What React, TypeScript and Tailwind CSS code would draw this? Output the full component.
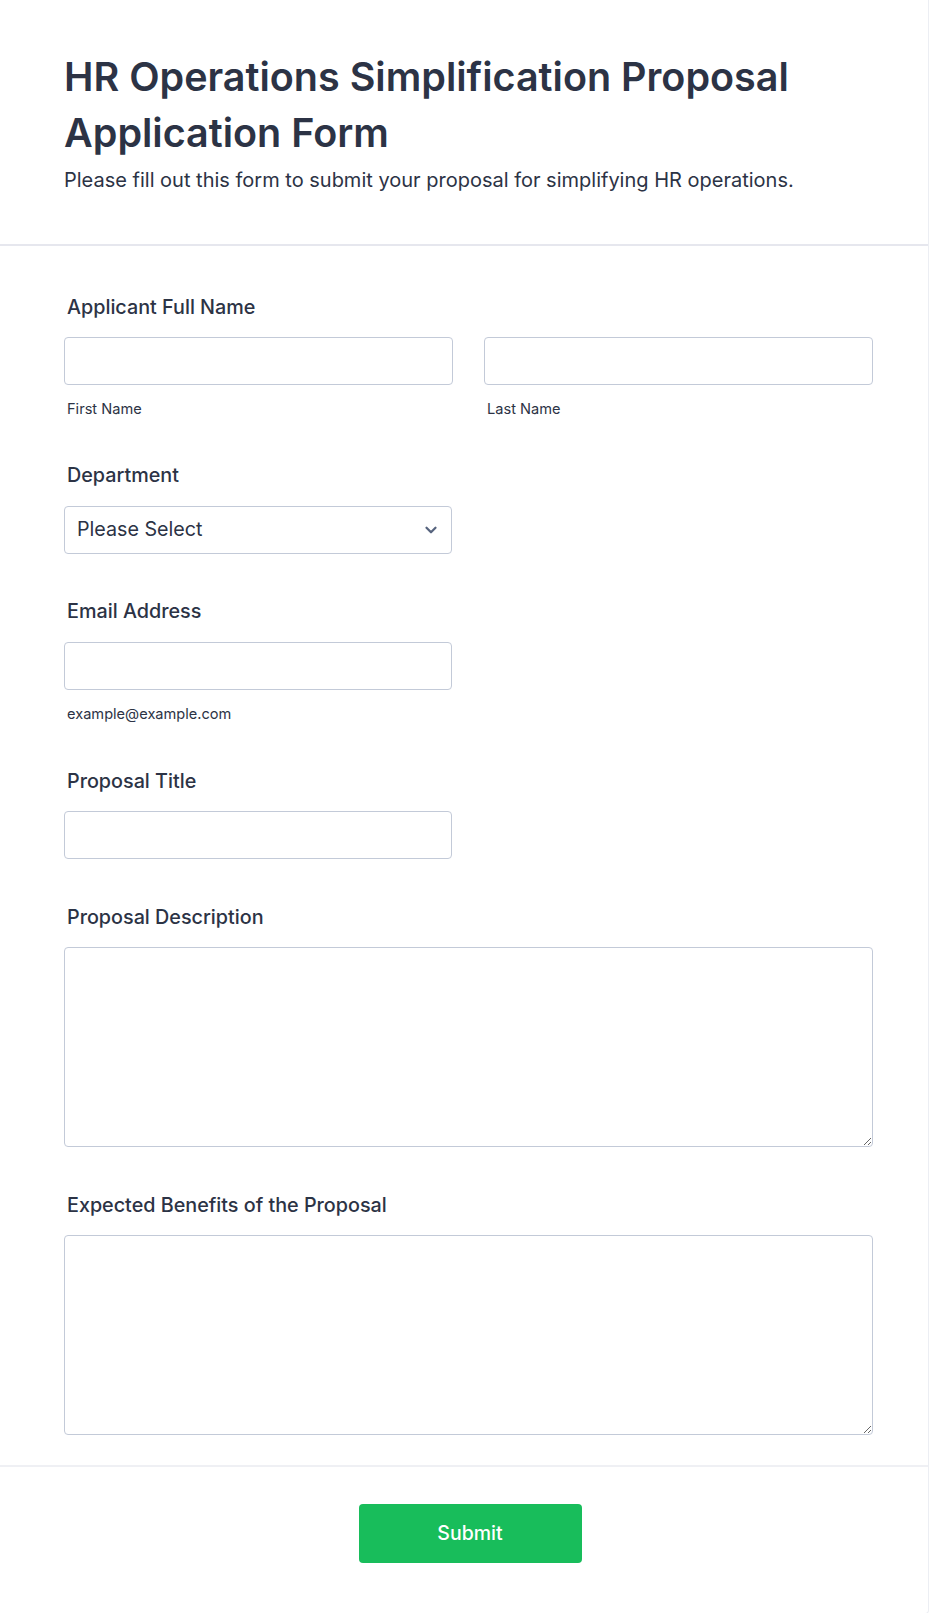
import React from 'react';
import { ChevronDown } from 'lucide-react';

const font = { fontFamily: 'Inter, "Noto Sans", sans-serif' };

function Label({ children }: { children: React.ReactNode }) {
  return <label className="block pl-[3px] text-[19.75px] font-medium leading-[24px] text-[#2c3345]">{children}</label>;
}

function Sublabel({ children }: { children: React.ReactNode }) {
  return <span className="block pl-[3px] pt-[15px] text-[14.6px] leading-[18px] text-[#2c3345]">{children}</span>;
}

const fieldCls =
  'block h-[48px] rounded-[4px] border border-[#c3cad8] bg-white px-3 text-[19.7px] text-[#2c3345] outline-none';

export default function App() {
  return (
    <div className="min-h-[1613px] bg-white" style={font}>
      <div className="w-[929px] rounded-br-[4px] border-r border-b border-[#eceef3] bg-white">
        {/* Header */}
        <div className="border-b-2 border-[#e6e7ee] pl-[64px] pr-[55px] pt-[49px] pb-[50px]">
          <h1 className="text-[39.5px] font-semibold leading-[56px] text-[#2c3345]">
            HR Operations Simplification Proposal Application Form
          </h1>
          <p className="mt-[5px] text-[20px] leading-[28px] text-[#2c3345]">
            Please fill out this form to submit your proposal for simplifying HR operations.
          </p>
        </div>

        {/* Fields */}
        <div className="flex flex-col pl-[64px] pr-[55px] pt-[49px] pb-[30px]">
          <div>
            <Label>Applicant Full Name</Label>
            <div className="mt-[18px] grid grid-cols-2 gap-[31px]">
              <div>
                <input className={`${fieldCls} w-full`} />
                <Sublabel>First Name</Sublabel>
              </div>
              <div>
                <input className={`${fieldCls} w-full`} />
                <Sublabel>Last Name</Sublabel>
              </div>
            </div>
          </div>

          <div className="mt-[45px]">
            <Label>Department</Label>
            <div className="relative mt-[19px] w-[388px]">
              <select className={`${fieldCls} w-full appearance-none`} defaultValue="">
                <option value="">Please Select</option>
              </select>
              <ChevronDown
                className="pointer-events-none absolute right-[12px] top-[15px] h-[18px] w-[18px] text-[#57647e]"
                strokeWidth={3}
              />
            </div>
          </div>

          <div className="mt-[45px]">
            <Label>Email Address</Label>
            <input className={`${fieldCls} mt-[19px] w-[388px]`} />
            <Sublabel>example@example.com</Sublabel>
          </div>

          <div className="mt-[46px]">
            <Label>Proposal Title</Label>
            <input className={`${fieldCls} mt-[18px] w-[388px]`} />
          </div>

          <div className="mt-[46px]">
            <Label>Proposal Description</Label>
            <textarea className="mt-[18px] block h-[200px] w-full resize-y rounded-[4px] border border-[#c3cad8] px-3 py-2 text-[18px] outline-none" />
          </div>

          <div className="mt-[46px]">
            <Label>Expected Benefits of the Proposal</Label>
            <textarea className="mt-[18px] block h-[200px] w-full resize-y rounded-[4px] border border-[#c3cad8] px-3 py-2 text-[18px] outline-none" />
          </div>
        </div>

        {/* Footer */}
        <div className="flex justify-center border-t-2 border-[#eff0f4] pl-[67px] pr-[55px] pt-[37px] pb-[50px]">
          <button className="h-[59px] w-[223px] rounded-[4px] bg-[#18bd5b] text-[19.5px] font-medium text-white">
            Submit
          </button>
        </div>
      </div>
    </div>
  );
}
